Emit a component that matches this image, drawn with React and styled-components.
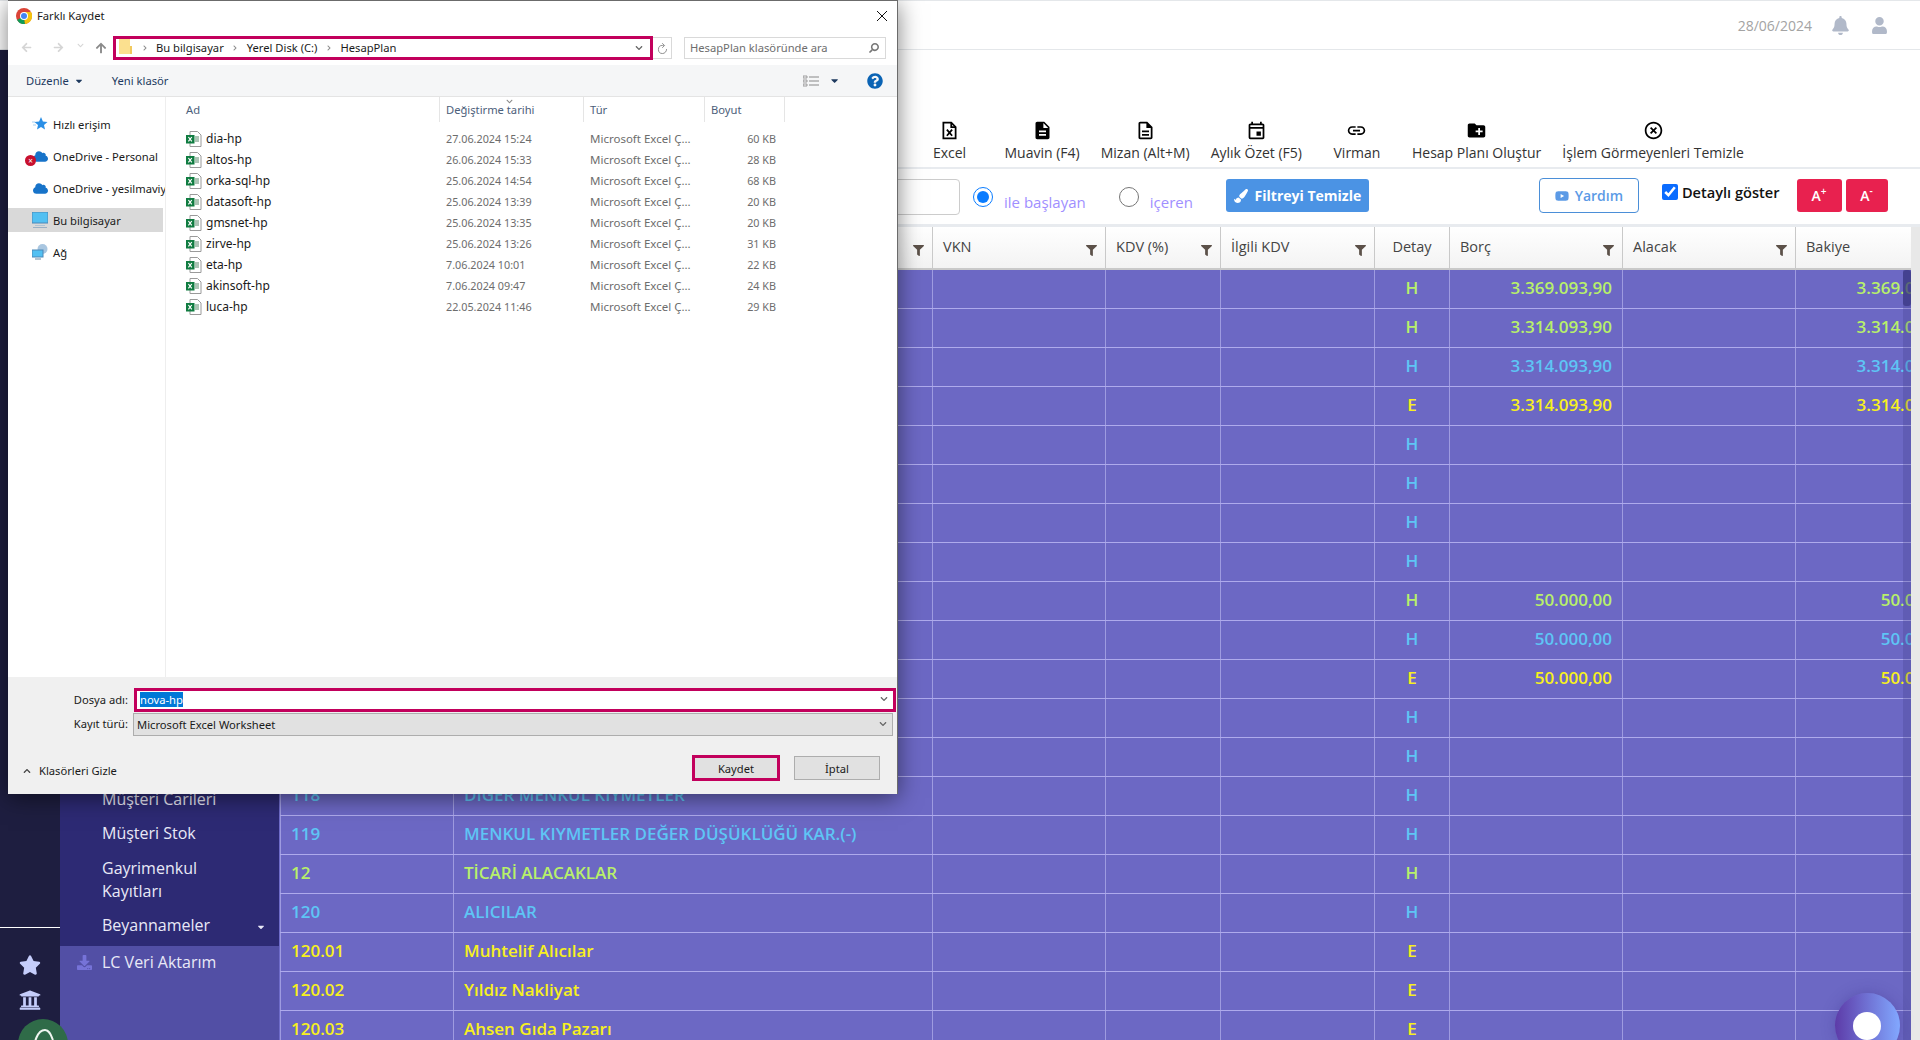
import React from 'react';
import styled, { createGlobalStyle } from 'styled-components';
import {
  MdOutlineDescription,
  MdDescription,
  MdOutlineEvent,
  MdLink,
  MdCreateNewFolder,
  MdHighlightOff,
} from 'react-icons/md';
import {
  FaBell,
  FaUser,
  FaStar,
  FaUniversity,
  FaPaintBrush,
  FaDownload,
  FaYoutube,
  FaFilter,
  FaCloud,
  FaCaretDown,
  FaChevronRight,
  FaChevronDown,
  FaArrowUp,
  FaArrowLeft,
  FaArrowRight,
  FaSearch,
  FaQuestionCircle,
} from 'react-icons/fa';
import { IoRefresh } from 'react-icons/io5';

const GlobalStyle = createGlobalStyle`
  html, body {
    margin: 0;
    padding: 0;
    height: 100%;
    overflow: hidden;
    background: #fff;
    font-family: "Open Sans", "Noto Sans", sans-serif;
  }
  * { box-sizing: border-box; }
`;

const Page = styled.div`
  position: relative;
  width: 1920px;
  height: 1040px;
  overflow: hidden;
  display: flex;
  flex-direction: column;
`;

/* top bar */
const TopBar = styled.header`
  flex: 0 0 50px;
  display: flex;
  align-items: center;
  justify-content: flex-end;
  padding-right: 32px;
  gap: 21px;
  background: #fff;
  border-top: 1px solid #e4e7ea;
  border-bottom: 1px solid #e4e7ea;
  color: #b1b9c9;
`;
const DateText = styled.span`
  margin-right: -2px;
  font-size: 14px;
  color: #a3a3a3;
`;
const Body = styled.div`
  flex: 1;
  display: flex;
  min-height: 0;
`;

/* left rail */
const Rail = styled.nav`
  position: relative;
  z-index: 1;
  flex: 0 0 60px;
  background: #1e1e40;
  display: flex;
  flex-direction: column;
  justify-content: flex-end;
  align-items: center;
  color: #c5cdfb;
`;
const RailLine = styled.div`
  width: 100%;
  height: 1px;
  background: #fff;
  margin-bottom: 26px;
`;
const RailIcon = styled.div`
  display: flex;
  justify-content: center;
  margin-bottom: 13px;
  font-size: 22px;
  line-height: 0;
`;
const Avatar = styled.div`
  width: 50px;
  height: 50px;
  margin: -5px -26px -29px 0;
  border-radius: 50%;
  background: #2f6b48;
  display: flex;
  justify-content: center;
  padding-top: 8px;
`;

/* side menu */
const SideMenu = styled.aside`
  flex: 0 0 220px;
  display: flex;
  flex-direction: column;
  background: #524fa5;
  border-right: 1px solid #6e6bc8;
`;
const SubMenu = styled.ul`
  flex: 0 0 896px;
  margin: 0;
  padding: 0 0 4px 42px;
  list-style: none;
  display: flex;
  flex-direction: column;
  justify-content: flex-end;
  background: #2d2a74;
`;
const MenuItem = styled.li`
  position: relative;
  width: 125px;
  padding: ${(p) => (p.$tall ? '7.5px 0 6.5px' : '5.5px 0')};
  font-size: 16px;
  line-height: 22.5px;
  color: #e9e9f7;
  white-space: ${(p) => (p.$tall ? 'normal' : 'nowrap')};
`;
const MenuCaret = styled.span`
  position: absolute;
  left: 154px;
  top: 8px;
  font-size: 10px;
  color: #e9e9f7;
`;
const LcItem = styled.div`
  display: flex;
  align-items: center;
  gap: 10px;
  padding: 5px 0 0 17px;
  font-size: 16px;
  line-height: 22.5px;
  color: #e9e9f7;
  svg { color: #7673d8; font-size: 15px; }
`;

/* main area */
const Main = styled.main`
  flex: 1;
  min-width: 0;
  display: flex;
  flex-direction: column;
  background: #fff;
`;
const Toolbar = styled.div`
  flex: 0 0 119px;
  display: flex;
  align-items: flex-end;
  padding: 0 0 4px 625px;
  border-bottom: 2px solid #e8ebef;
`;
const ToolButton = styled.div`
  min-width: 89px;
  padding: 0 10.5px;
  display: flex;
  flex-direction: column;
  align-items: center;
  font-size: 14px;
  line-height: 20px;
  color: #333;
  white-space: nowrap;
  svg { font-size: 21px; color: #000; margin-bottom: 2px; display: block; }
`;
const FilterRow = styled.div`
  flex: 0 0 58px;
  display: flex;
  align-items: flex-start;
  padding: 9px 0 0 480px;
  border-bottom: 3px solid #e8ebef;
`;
const SearchBox = styled.input`
  width: 200px;
  height: 36px;
  margin: 1px 13px 0 0;
  border: 1px solid #ccc;
  border-radius: 4px;
  background: #fff;
`;
const RadioWrap = styled.label`
  display: flex;
  align-items: flex-start;
  gap: 11px;
  margin-right: ${(p) => p.$gap}px;
  font-size: 15px;
  line-height: 22px;
  color: #a08fff;
  span { margin-top: 13px; }
`;
const Radio = styled.input.attrs({ type: 'radio' })`
  width: 20px;
  height: 20px;
  margin: 9px 0 0 0;
  accent-color: #0a7cff;
`;
const ClearButton = styled.button`
  height: 33px;
  width: 143px;
  margin: 1px 0 0 0;
  display: flex;
  align-items: center;
  justify-content: center;
  gap: 7px;
  border: 0;
  border-radius: 3px;
  background: #4b93e4;
  color: #fff;
  font-family: inherit;
  font-size: 14px;
  font-weight: 700;
`;
const HelpButton = styled.button`
  height: 35px;
  width: 100px;
  margin-left: 170px;
  display: flex;
  align-items: center;
  justify-content: center;
  gap: 6px;
  border: 1px solid #4b8fd8;
  border-radius: 4px;
  background: #fff;
  color: #5b9ae6;
  font-family: inherit;
  font-size: 14px;
  font-weight: 600;
`;
const DetailLabel = styled.label`
  display: flex;
  align-items: center;
  gap: 4px;
  margin: 5px 17px 0 23px;
  font-size: 14.6px;
  line-height: 18px;
  font-weight: 600;
  color: #111;
`;
const DetailCheck = styled.input.attrs({ type: 'checkbox' })`
  width: 16px;
  height: 16px;
  margin: 0;
  accent-color: #0a6cff;
`;
const SizeButton = styled.button`
  height: 33px;
  width: ${(p) => p.$w}px;
  margin: 1px 4px 0 0;
  border: 0;
  border-radius: 3px;
  background: #e8214f;
  color: #fff;
  font-family: inherit;
  font-size: 14px;
  font-weight: 600;
  sup { font-size: 10px; line-height: 0; }
`;

/* table */
const TableArea = styled.div`
  flex: 1;
  min-height: 0;
  background: #e8e8e8;
`;
const TableClip = styled.div`
  position: relative;
  width: 1631px;
  height: 100%;
  overflow: hidden;
`;
const GRID = '173px 479px 173px 115px 154px 75px 173px 173px 173px';
const HeadRow = styled.div`
  display: grid;
  grid-template-columns: ${GRID};
  height: 43px;
  border-bottom: 2px solid #c9c9c9;
  background: linear-gradient(#fff, #f3f3f3);
`;
const HeadCell = styled.div`
  position: relative;
  display: flex;
  align-items: center;
  justify-content: ${(p) => (p.$center ? 'center' : 'flex-start')};
  padding: 0 10px 2px;
  border-left: 1px solid #c9c9c9;
  font-size: 14.5px;
  font-weight: 500;
  color: #444;
  svg { position: absolute; right: 8px; top: 18px; font-size: 11px; color: #5c5149; }
`;
const Row = styled.div`
  display: grid;
  grid-template-columns: ${GRID};
  height: 39px;
  border-bottom: 1px solid #aeaaec;
  background: #6c68c4;
`;
const Cell = styled.div`
  display: flex;
  align-items: center;
  justify-content: ${(p) => p.$align || 'flex-start'};
  padding: 0 10px 3px;
  border-left: 1px solid #9e9be0;
  font-size: 17px;
  font-weight: 600;
  white-space: nowrap;
  color: ${(p) => p.$color};
`;
const ScrollTrack = styled.div`
  position: absolute;
  right: 0;
  top: 43px;
  bottom: 0;
  width: 8px;
  background: rgba(60, 55, 130, 0.25);
`;
const ScrollThumb = styled.div`
  height: 36px;
  border-radius: 3px;
  background: rgba(50, 46, 120, 0.6);
`;
const Bubble = styled.div`
  position: absolute;
  left: 1835px;
  top: 993px;
  width: 65px;
  height: 65px;
  border-radius: 50%;
  background: linear-gradient(90deg, #5d3ba8, #82a8ff);
  box-shadow: 0 0 14px rgba(60, 50, 140, 0.35);
  &::after {
    content: '';
    position: absolute;
    left: 18px;
    top: 19px;
    width: 28px;
    height: 28px;
    border-radius: 50%;
    background: #fff;
  }
`;

/* save dialog */
const Dialog = styled.section`
  position: absolute;
  z-index: 5;
  left: 8px;
  top: 0;
  width: 890px;
  height: 794px;
  display: flex;
  flex-direction: column;
  background: #fff;
  border-top: 1px solid #6b6b6b;
  border-right: 1px solid #6b6b6b;
  box-shadow: 0 4px 22px rgba(0, 0, 0, 0.5);
  font-family: "Noto Sans", "Open Sans", sans-serif;
  font-size: 11.2px;
  color: #1a1a1a;
`;
const TitleBar = styled.div`
  flex: 0 0 29px;
  display: flex;
  align-items: center;
  gap: 5px;
  padding: 0 9px 0 8px;
  font-size: 11.2px;
`;
const CloseGlyph = styled.svg`
  margin-left: auto;
  width: 12px;
  height: 12px;
`;
const AddressRow = styled.div`
  flex: 0 0 35px;
  display: flex;
  align-items: flex-start;
  padding: 6px 0 0 13px;
`;
const NavArrow = styled.span`
  display: flex;
  width: ${(p) => p.$w}px;
  padding-top: 6px;
  font-size: ${(p) => p.$size || 11}px;
  color: ${(p) => p.$color || '#d5d5d5'};
`;
const Address = styled.div`
  width: 540px;
  height: 24px;
  display: flex;
  align-items: center;
  padding: 0 7px 1px 3px;
  border: 3px solid #c2005c;
  svg.sep { font-size: 6px; color: #8a8a8a; margin: 0 8.5px; }
  svg.sep:first-of-type { margin-left: 7px; }
  svg.drop { margin-left: auto; font-size: 8px; color: #666; }
`;
const Refresh = styled.div`
  width: 19px;
  height: 22px;
  display: flex;
  align-items: center;
  justify-content: center;
  margin-top: 1px;
  border: 1px solid #d9d9d9;
  border-left: 0;
  color: #777;
  font-size: 13px;
`;
const SearchField = styled.div`
  width: 202px;
  height: 22px;
  margin: 1px 0 0 12px;
  display: flex;
  align-items: center;
  justify-content: space-between;
  padding: 0 6px 1px 5px;
  border: 1px solid #d9d9d9;
  color: #6d6d6d;
  svg { font-size: 10px; color: #777; transform: scaleX(-1); }
`;
const CommandBar = styled.div`
  flex: 0 0 32px;
  display: flex;
  align-items: center;
  gap: 28px;
  padding: 0 14px 0 18px;
  background: #f5f6f7;
  border-bottom: 1px solid #e4e4e4;
  color: #1e3a5f;
`;
const CommandItem = styled.span`
  display: flex;
  align-items: center;
  gap: 5px;
  svg { font-size: 10px; }
`;
const CommandRight = styled.div`
  margin-left: auto;
  display: flex;
  align-items: center;
  gap: 10px;
`;
const HelpIcon = styled(FaQuestionCircle)`
  margin-left: 17px;
  font-size: 16px;
  color: #0a63b4;
`;
const Files = styled.div`
  flex: 1;
  display: flex;
  min-height: 0;
`;
const NavPane = styled.div`
  flex: 0 0 158px;
  width: 158px;
  min-width: 0;
  overflow: hidden;
  padding-top: 11px;
  border-right: 1px solid #eee;
`;
const NavItem = styled.div`
  display: flex;
  align-items: center;
  height: ${(p) => (p.$active ? 24 : 32)}px;
  margin: ${(p) => (p.$active ? '4px 2px 4px 0' : '0')};
  padding-left: 24px;
  gap: 5px;
  white-space: nowrap;
  overflow: hidden;
  position: relative;
  background: ${(p) => (p.$active ? '#d9d9d9' : 'transparent')};
`;
const NavIconBox = styled.span`
  flex: 0 0 16px;
  height: 16px;
  display: flex;
  align-items: center;
  justify-content: center;
  color: #1773c9;
  font-size: 15px;
`;
const ErrorDot = styled.span`
  position: absolute;
  left: 17px;
  top: 15px;
  width: 11px;
  height: 11px;
  border-radius: 50%;
  background: #c8102e;
  color: #fff;
  font-size: 8px;
  line-height: 11px;
  text-align: center;
`;
const FileList = styled.div`
  flex: 1;
  min-width: 0;
  padding-left: 16px;
`;
const FILE_GRID = '258px 144px 121px 80px';
const FileHead = styled.div`
  display: grid;
  grid-template-columns: ${FILE_GRID};
  height: 25px;
  margin-bottom: 6px;
  color: #4c607a;
`;
const FileHeadCell = styled.div`
  position: relative;
  display: flex;
  align-items: center;
  padding-left: ${(p) => p.$pad}px;
  border-right: 1px solid #e5e5e5;
  svg { position: absolute; left: 66px; top: 1px; font-size: 7px; color: #8a8a8a; }
`;
const FileRow = styled.div`
  display: grid;
  grid-template-columns: ${FILE_GRID};
  align-items: center;
  height: 21px;
  color: #6d6d6d;
`;
const FileName = styled.div`
  display: flex;
  align-items: center;
  gap: 4px;
  padding-left: 4px;
  font-size: 12px;
  color: #1a1a1a;
`;
const FileDate = styled.div`
  padding-left: 6px;
  font-size: 10.8px;
  white-space: nowrap;
`;
const FileType = styled.div`
  padding-left: 6px;
  font-size: 11.5px;
  white-space: nowrap;
`;
const FileSize = styled.div`
  padding-right: 9px;
  font-size: 10.8px;
  text-align: right;
`;
const BottomPanel = styled.div`
  flex: 0 0 117px;
  display: flex;
  flex-direction: column;
  background: #f0f0f0;
`;
const FieldRow = styled.div`
  display: flex;
  align-items: center;
  height: ${(p) => p.$h}px;
  margin-top: ${(p) => p.$top}px;
`;
const FieldLabel = styled.label`
  flex: 0 0 120px;
  padding-bottom: 2px;
  text-align: right;
`;
const NameInput = styled.div`
  width: 762px;
  height: 24px;
  margin-left: 6px;
  display: flex;
  align-items: center;
  justify-content: space-between;
  padding: 0 5px 2px 3px;
  background: #fff;
  border: 3px solid #c2005c;
  svg { font-size: 8px; color: #666; }
`;
const Selected = styled.span`
  background: #0078d7;
  color: #fff;
  line-height: 15px;
`;
const TypeSelect = styled.div`
  width: 760px;
  height: 23px;
  margin-left: 5px;
  display: flex;
  align-items: center;
  justify-content: space-between;
  padding: 0 5px 1px 3px;
  background: #e1e1e1;
  border: 1px solid #adadad;
  svg { font-size: 8px; color: #666; }
`;
const ActionRow = styled.div`
  display: flex;
  align-items: center;
  margin-top: 19px;
  padding: 0 17px 0 15px;
`;
const HideFolders = styled.span`
  display: flex;
  align-items: center;
  gap: 8px;
  margin-top: 5px;
  svg { font-size: 8px; color: #444; transform: rotate(180deg); }
`;
const SaveFrame = styled.div`
  margin-left: auto;
  width: 88px;
  height: 26px;
  display: flex;
  align-items: center;
  justify-content: center;
  border: 3px solid #c2005c;
  background: #e1e1e1;
`;
const CancelButton = styled.div`
  width: 86px;
  height: 24px;
  margin-left: 14px;
  display: flex;
  align-items: center;
  justify-content: center;
  background: #e1e1e1;
  border: 1px solid #adadad;
`;

const ExcelToolIcon = () => (
  <svg width="21" height="21" viewBox="0 0 24 24" fill="none">
    <path d="M6 3h8l5 5v13H5V3z" stroke="#000" strokeWidth="2" />
    <path d="M14 3v5h5" stroke="#000" strokeWidth="2" />
    <path d="M9 11l6 7M15 11l-6 7" stroke="#000" strokeWidth="2" />
  </svg>
);

const ChromeIcon = () => (
  <svg width="16" height="16" viewBox="0 0 16 16">
    <circle cx="8" cy="8" r="8" fill="#db4437" />
    <path d="M8 8L1 12a8 8 0 0 0 8 4z" fill="#0f9d58" />
    <path d="M8 8l1 8a8 8 0 0 0 6-12H8z" fill="#f4c20d" />
    <circle cx="8" cy="8" r="4" fill="#fff" />
    <circle cx="8" cy="8" r="3" fill="#4285f4" />
  </svg>
);

const ExcelFileIcon = () => (
  <svg width="16" height="16" viewBox="0 0 16 16">
    <path d="M4 .5h7.5L15 4v11.500H4z" fill="#fff" stroke="#9a9a9a" />
    <path d="M9 6h4M9 8h4M9 10h4" stroke="#5a8a6c" />
    <rect x="0" y="4" width="8.5" height="8.5" fill="#107c41" />
    <path d="M2.400 6l3.400 4.400M5.800 6l-3.400 4.400" stroke="#fff" strokeWidth="1.2" />
  </svg>
);

const FolderIcon = () => (
  <svg width="14" height="17" viewBox="0 0 14 17">
    <path d="M0 0h11v15H0z" fill="#fbe08f" />
    <path d="M0 15h13V7h-2v8z" fill="#f1c95e" />
  </svg>
);

const MonitorIcon = () => (
  <svg width="16" height="16" viewBox="0 0 16 16">
    <rect x="0" y="0" width="16" height="11" fill="#52c0f2" stroke="#4a88b8" />
    <rect x="3" y="13" width="10" height="1" fill="#b0c4d4" />
    <rect x="1" y="15" width="14" height="1" fill="#9ab0c4" />
  </svg>
);

const NetworkIcon = () => (
  <svg width="16" height="16" viewBox="0 0 16 16">
    <circle cx="10.500" cy="5" r="5" fill="#a9c6e0" />
    <rect x="0" y="6" width="11" height="7" fill="#52c0f2" stroke="#4a88b8" />
    <rect x="3" y="14.500" width="6" height="1" fill="#6a8aa4" />
  </svg>
);

const QuickIcon = () => (
  <svg width="16" height="16" viewBox="0 0 16 16">
    <path d="M9 1l1.900 4.600 4.600.4-3.500 3 1 4.600L9 10.900 5 13.600l1-4.600L2.500 6l4.600-.4z" fill="#2a8fe6" />
    <path d="M0 6h3M1 9h3" stroke="#a8d2f2" />
  </svg>
);

const AvatarMark = () => (
  <svg width="26" height="30" viewBox="0 0 26 30" fill="none">
    <path d="M6 26C2 16 8 3 15 3c5 0 6 6 8 10" stroke="#f0f5f0" strokeWidth="2" />
    <circle cx="10" cy="16" r="2.500" fill="#f0f5f0" />
  </svg>
);

const BLUE = '#5ec5f5';
const GREEN = '#b8f06a';
const YELLOW = '#f7f01e';

const COLUMNS = [
  { title: '' },
  { title: '', filter: true },
  { title: 'VKN', filter: true },
  { title: 'KDV (%)', filter: true },
  { title: 'İlgili KDV', filter: true },
  { title: 'Detay', center: true },
  { title: 'Borç', filter: true },
  { title: 'Alacak', filter: true },
  { title: 'Bakiye', filter: true },
];

const ROWS = [
  { detail: 'H', color: GREEN, debt: '3.369.093,90' },
  { detail: 'H', color: GREEN, debt: '3.314.093,90' },
  { detail: 'H', color: BLUE, debt: '3.314.093,90' },
  { detail: 'E', color: YELLOW, debt: '3.314.093,90' },
  { detail: 'H', color: BLUE },
  { detail: 'H', color: BLUE },
  { detail: 'H', color: BLUE },
  { detail: 'H', color: BLUE },
  { detail: 'H', color: GREEN, debt: '50.000,00' },
  { detail: 'H', color: BLUE, debt: '50.000,00' },
  { detail: 'E', color: YELLOW, debt: '50.000,00' },
  { detail: 'H', color: BLUE },
  { detail: 'H', color: BLUE },
  { detail: 'H', color: BLUE, code: '118', name: 'DİĞER MENKUL KIYMETLER' },
  { detail: 'H', color: BLUE, code: '119', name: 'MENKUL KIYMETLER DEĞER DÜŞÜKLÜĞÜ KAR.(-)' },
  { detail: 'H', color: GREEN, code: '12', name: 'TİCARİ ALACAKLAR' },
  { detail: 'H', color: BLUE, code: '120', name: 'ALICILAR' },
  { detail: 'E', color: YELLOW, code: '120.01', name: 'Muhtelif Alıcılar' },
  { detail: 'E', color: YELLOW, code: '120.02', name: 'Yıldız Nakliyat' },
  { detail: 'E', color: YELLOW, code: '120.03', name: 'Ahsen Gıda Pazarı' },
];

const FILES = [
  ['dia-hp', '27.06.2024 15:24', '60 KB'],
  ['altos-hp', '26.06.2024 15:33', '28 KB'],
  ['orka-sql-hp', '25.06.2024 14:54', '68 KB'],
  ['datasoft-hp', '25.06.2024 13:39', '20 KB'],
  ['gmsnet-hp', '25.06.2024 13:35', '20 KB'],
  ['zirve-hp', '25.06.2024 13:26', '31 KB'],
  ['eta-hp', '7.06.2024 10:01', '22 KB'],
  ['akinsoft-hp', '7.06.2024 09:47', '24 KB'],
  ['luca-hp', '22.05.2024 11:46', '29 KB'],
];

const TOOLS = [
  { label: 'Excel', icon: <ExcelToolIcon /> },
  { label: 'Muavin (F4)', icon: <MdDescription /> },
  { label: 'Mizan (Alt+M)', icon: <MdOutlineDescription /> },
  { label: 'Aylık Özet (F5)', icon: <MdOutlineEvent /> },
  { label: 'Virman', icon: <MdLink /> },
  { label: 'Hesap Planı Oluştur', icon: <MdCreateNewFolder /> },
  { label: 'İşlem Görmeyenleri Temizle', icon: <MdHighlightOff /> },
];

const SaveDialog = () => (
  <Dialog>
    <TitleBar>
      <ChromeIcon />
      Farklı Kaydet
      <CloseGlyph viewBox="0 0 12 12">
        <path d="M1 1l10 10M11 1L1 11" stroke="#111" strokeWidth="1" />
      </CloseGlyph>
    </TitleBar>
    <AddressRow>
      <NavArrow $w={32}><FaArrowLeft /></NavArrow>
      <NavArrow $w={24}><FaArrowRight /></NavArrow>
      <NavArrow $w={18} $size={7}><FaChevronDown /></NavArrow>
      <NavArrow $w={18} $size={12} $color="#8a8a8a"><FaArrowUp /></NavArrow>
      <Address>
        <FolderIcon />
        <FaChevronRight className="sep" />
        Bu bilgisayar
        <FaChevronRight className="sep" />
        Yerel Disk (C:)
        <FaChevronRight className="sep" />
        HesapPlan
        <FaChevronDown className="drop" />
      </Address>
      <Refresh><IoRefresh /></Refresh>
      <SearchField>
        HesapPlan klasöründe ara
        <FaSearch />
      </SearchField>
    </AddressRow>
    <CommandBar>
      <CommandItem>Düzenle <FaCaretDown /></CommandItem>
      <CommandItem>Yeni klasör</CommandItem>
      <CommandRight>
        <svg width="16" height="12" viewBox="0 0 16 12">
          <path d="M0 1h4v2H0zM0 5h4v2H0zM0 9h4v2H0z" fill="none" stroke="#888" strokeWidth="0.8" />
          <path d="M6 2h10M6 6h10M6 10h10" stroke="#888" />
        </svg>
        <FaCaretDown />
        <HelpIcon />
      </CommandRight>
    </CommandBar>
    <Files>
      <NavPane>
        <NavItem><NavIconBox><QuickIcon /></NavIconBox>Hızlı erişim</NavItem>
        <NavItem>
          <NavIconBox><FaCloud /></NavIconBox>
          OneDrive - Personal
          <ErrorDot>×</ErrorDot>
        </NavItem>
        <NavItem><NavIconBox><FaCloud /></NavIconBox>OneDrive - yesilmaviyazilim</NavItem>
        <NavItem $active><NavIconBox><MonitorIcon /></NavIconBox>Bu bilgisayar</NavItem>
        <NavItem><NavIconBox><NetworkIcon /></NavIconBox>Ağ</NavItem>
      </NavPane>
      <FileList>
        <FileHead>
          <FileHeadCell $pad={4}>Ad</FileHeadCell>
          <FileHeadCell $pad={6}>Değiştirme tarihi<FaChevronDown /></FileHeadCell>
          <FileHeadCell $pad={6}>Tür</FileHeadCell>
          <FileHeadCell $pad={6}>Boyut</FileHeadCell>
        </FileHead>
        {FILES.map(([name, date, size]) => (
          <FileRow key={name}>
            <FileName><ExcelFileIcon />{name}</FileName>
            <FileDate>{date}</FileDate>
            <FileType>Microsoft Excel Ç...</FileType>
            <FileSize>{size}</FileSize>
          </FileRow>
        ))}
      </FileList>
    </Files>
    <BottomPanel>
      <FieldRow $h={24} $top={11}>
        <FieldLabel>Dosya adı:</FieldLabel>
        <NameInput>
          <Selected>nova-hp</Selected>
          <FaChevronDown />
        </NameInput>
      </FieldRow>
      <FieldRow $h={23} $top={1}>
        <FieldLabel>Kayıt türü:</FieldLabel>
        <TypeSelect>
          Microsoft Excel Worksheet
          <FaChevronDown />
        </TypeSelect>
      </FieldRow>
      <ActionRow>
        <HideFolders><FaChevronDown />Klasörleri Gizle</HideFolders>
        <SaveFrame>Kaydet</SaveFrame>
        <CancelButton>İptal</CancelButton>
      </ActionRow>
    </BottomPanel>
  </Dialog>
);

const App = () => (
  <Page>
    <GlobalStyle />
    <TopBar>
      <DateText>28/06/2024</DateText>
      <FaBell size={19} />
      <FaUser size={17} />
    </TopBar>
    <Body>
      <Rail>
        <RailLine />
        <RailIcon><FaStar /></RailIcon>
        <RailIcon><FaUniversity /></RailIcon>
        <Avatar><AvatarMark /></Avatar>
      </Rail>
      <SideMenu>
        <SubMenu>
          <MenuItem>Müşteri Carileri</MenuItem>
          <MenuItem>Müşteri Stok</MenuItem>
          <MenuItem $tall>Gayrimenkul Kayıtları</MenuItem>
          <MenuItem>
            Beyannameler
            <MenuCaret><FaCaretDown /></MenuCaret>
          </MenuItem>
        </SubMenu>
        <LcItem><FaDownload />LC Veri Aktarım</LcItem>
      </SideMenu>
      <Main>
        <Toolbar>
          {TOOLS.map((tool) => (
            <ToolButton key={tool.label}>
              {tool.icon}
              {tool.label}
            </ToolButton>
          ))}
        </Toolbar>
        <FilterRow>
          <SearchBox />
          <RadioWrap $gap={33}><Radio name="match" defaultChecked /><span>ile başlayan</span></RadioWrap>
          <RadioWrap $gap={33}><Radio name="match" /><span>içeren</span></RadioWrap>
          <ClearButton><FaPaintBrush />Filtreyi Temizle</ClearButton>
          <HelpButton><FaYoutube />Yardım</HelpButton>
          <DetailLabel><DetailCheck defaultChecked />Detaylı göster</DetailLabel>
          <SizeButton $w={45}>A<sup>+</sup></SizeButton>
          <SizeButton $w={42}>A<sup>-</sup></SizeButton>
        </FilterRow>
        <TableArea>
          <TableClip>
            <HeadRow>
              {COLUMNS.map((col, i) => (
                <HeadCell key={i} $center={col.center}>
                  {col.title}
                  {col.filter && <FaFilter />}
                </HeadCell>
              ))}
            </HeadRow>
            {ROWS.map((row, i) => (
              <Row key={i}>
                <Cell $color={row.color}>{row.code}</Cell>
                <Cell $color={row.color}>{row.name}</Cell>
                <Cell />
                <Cell />
                <Cell />
                <Cell $color={row.color} $align="center">{row.detail}</Cell>
                <Cell $color={row.color} $align="flex-end">{row.debt}</Cell>
                <Cell />
                <Cell $color={row.color} $align="flex-end">{row.debt}</Cell>
              </Row>
            ))}
            <ScrollTrack><ScrollThumb /></ScrollTrack>
          </TableClip>
        </TableArea>
      </Main>
    </Body>
    <Bubble />
    <SaveDialog />
  </Page>
);

export default App;
